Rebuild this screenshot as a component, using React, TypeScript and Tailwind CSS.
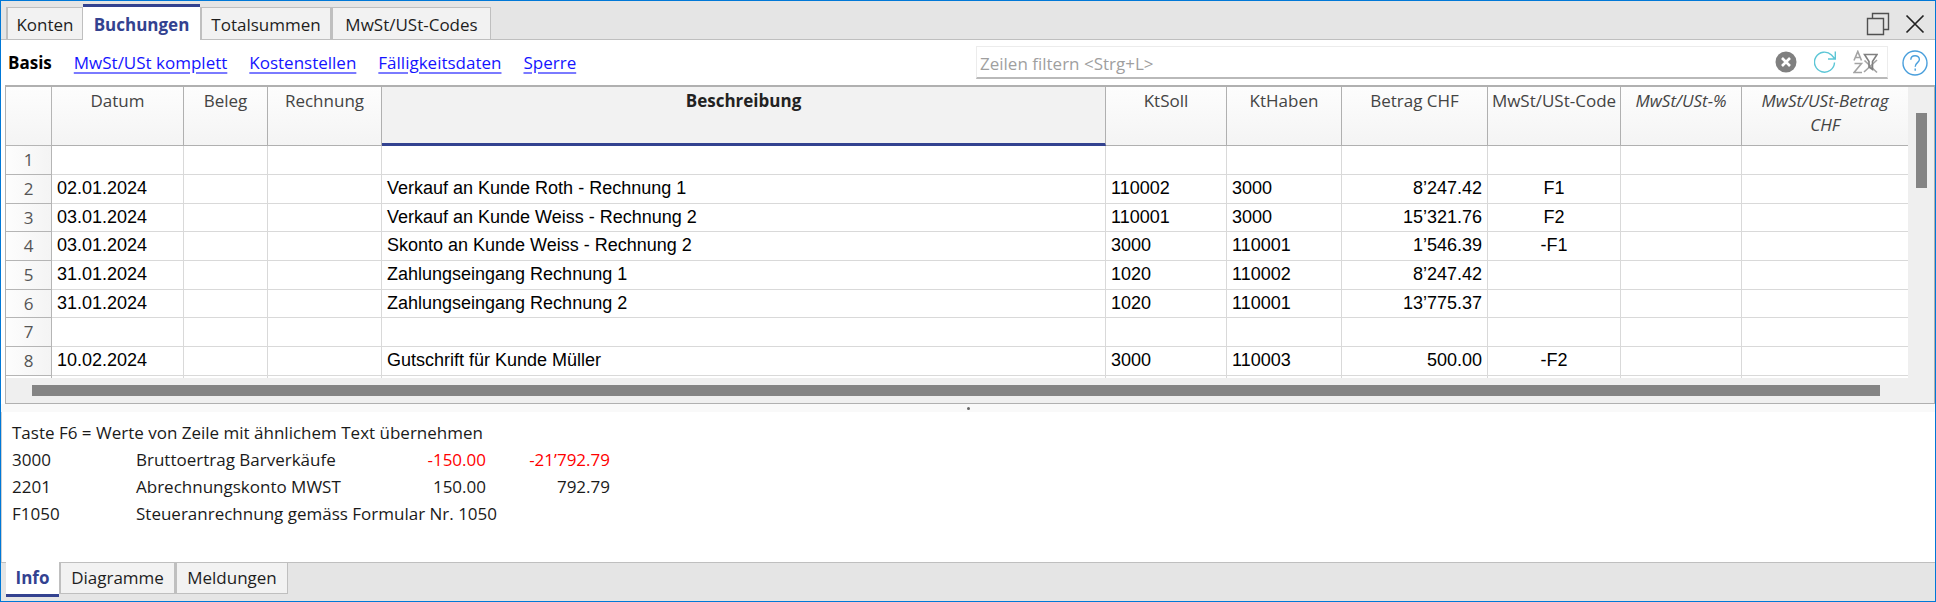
import React from "react";

type Align = "left" | "center" | "right";
interface Column {
  key: string;
  label: string;
  width: string;
  align: Align;
  italic?: boolean;
  active?: boolean;
}

const columns: Column[] = [
  { key: "datum", label: "Datum", width: "w-[132px]", align: "left" },
  { key: "beleg", label: "Beleg", width: "w-[84px]", align: "left" },
  { key: "rechnung", label: "Rechnung", width: "w-[114px]", align: "left" },
  { key: "text", label: "Beschreibung", width: "", align: "left", active: true },
  { key: "soll", label: "KtSoll", width: "w-[121px]", align: "left" },
  { key: "haben", label: "KtHaben", width: "w-[115px]", align: "left" },
  { key: "betrag", label: "Betrag CHF", width: "w-[146px]", align: "right" },
  { key: "code", label: "MwSt/USt-Code", width: "w-[133px]", align: "center" },
  { key: "prozent", label: "MwSt/USt-%", width: "w-[121px]", align: "center", italic: true },
  { key: "mwst", label: "MwSt/USt-Betrag CHF", width: "w-[166px]", align: "center", italic: true },
];

const rows: Record<string, string>[] = [
  {},
  { datum: "02.01.2024", text: "Verkauf an Kunde Roth - Rechnung 1", soll: "110002", haben: "3000", betrag: "8’247.42", code: "F1" },
  { datum: "03.01.2024", text: "Verkauf an Kunde Weiss - Rechnung 2", soll: "110001", haben: "3000", betrag: "15’321.76", code: "F2" },
  { datum: "03.01.2024", text: "Skonto an Kunde Weiss - Rechnung 2", soll: "3000", haben: "110001", betrag: "1’546.39", code: "-F1" },
  { datum: "31.01.2024", text: "Zahlungseingang Rechnung 1", soll: "1020", haben: "110002", betrag: "8’247.42" },
  { datum: "31.01.2024", text: "Zahlungseingang Rechnung 2", soll: "1020", haben: "110001", betrag: "13’775.37" },
  {},
  { datum: "10.02.2024", text: "Gutschrift für Kunde Müller", soll: "3000", haben: "110003", betrag: "500.00", code: "-F2" },
];

const alignClass: Record<Align, string> = {
  left: "text-left pl-[5px]",
  center: "text-center",
  right: "text-right pr-[5px]",
};

const infoRows = [
  { id: "3000", name: "Bruttoertrag Barverkäufe", a: "-150.00", b: "-21’792.79", negative: true },
  { id: "2201", name: "Abrechnungskonto MWST", a: "150.00", b: "792.79" },
  { id: "F1050", name: "Steueranrechnung gemäss Formular Nr. 1050", a: "", b: "" },
];

function TopTabs() {
  const tabs = [
    { label: "Konten", width: "w-[77px]" },
    { label: "Buchungen", width: "w-[117px]", active: true },
    { label: "Totalsummen", width: "w-[131px]" },
    { label: "MwSt/USt-Codes", width: "w-[160px]" },
  ];
  return (
    <div className="flex h-[39px] items-end justify-between bg-[#e5e5e5] shadow-[inset_0_-1px_0_#bfbfbf]">
      <div role="tablist" className="flex items-end pl-[5px]">
        {tabs.map((t) => (
          <button
            key={t.label}
            role="tab"
            aria-selected={!!t.active}
            className={
              t.active
                ? `${t.width} h-[36px] whitespace-nowrap border-t-[3px] border-[#334290] bg-white pt-[2px] font-bold text-[#334290]`
                : `${t.width} h-[33px] whitespace-nowrap border border-l-2 border-[#bfbfbf] bg-[#f2f2f2] pt-[2px] text-[#1e1e1e]`
            }
          >
            {t.label}
          </button>
        ))}
      </div>
      <div className="flex gap-[15px] pb-[4px] pr-[10px]">
        <button aria-label="Fenster wiederherstellen">
          <svg width="24" height="24" viewBox="0 0 24 24" fill="none" stroke="#505050" strokeWidth="1.4">
            <path d="M1.5 6.5h16v16h-16zM6.5 6.500v-5h16v16h-5" />
          </svg>
        </button>
        <button aria-label="Schliessen">
          <svg width="20" height="24" viewBox="0 0 20 24" fill="none" stroke="#222" strokeWidth="1.7">
            <path d="M1.500 3.500 18.500 20.500M18.500 3.500 1.500 20.500" />
          </svg>
        </button>
      </div>
    </div>
  );
}

function Toolbar() {
  const views = ["MwSt/USt komplett", "Kostenstellen", "Fälligkeitsdaten", "Sperre"];
  return (
    <div className="flex h-[45px] items-center justify-between bg-white px-[7px]">
      <nav className="flex items-center gap-[22px] whitespace-nowrap">
        <span className="font-bold text-black">Basis</span>
        {views.map((v) => (
          <a key={v} href="#" className="text-[#1414ff] underline decoration-[#7a7aff] decoration-2 underline-offset-[3px]">
            {v}
          </a>
        ))}
      </nav>
      <div className="flex w-[952px] items-center gap-[14px]">
        <div className="flex h-[33px] flex-1 items-center gap-[17px] border border-b-2 border-[#ececec] border-b-[#b9b9b9] pl-[3px] pr-[9px]">
          <input
            aria-label="Zeilen filtern"
            placeholder="Zeilen filtern <Strg+L>"
            className="min-w-0 flex-1 bg-transparent pt-[4px] outline-none placeholder:text-[#9f9f9f]"
          />
          <button aria-label="Filter löschen">
            <svg width="22" height="22" viewBox="0 0 22 22">
              <circle cx="11" cy="11" r="10.500" fill="#808080" />
              <path d="M7 7l8 8M15 7l-8 8" stroke="#fff" strokeWidth="2.600" />
            </svg>
          </button>
          <button aria-label="Aktualisieren">
            <svg width="22" height="22" viewBox="0 0 22 22" fill="none" stroke="#5cc6d6" strokeWidth="1.400">
              <path d="M20.500 11.500A10 10 0 1 1 17.500 4L21 8M21.300 .5V8H14" />
            </svg>
          </button>
          <button aria-label="Sortierung und Filter entfernen">
            <svg width="25" height="24" viewBox="0 0 25 24" fill="none" stroke="#a3a3a3" strokeWidth="1.600">
              <path d="M1 10.500 4.800 1.500 8.500 10.500M2.300 7.500h5M1.500 13.500h7L1 22.500h8" />
              <path d="M11 22 24 10M11.500 10.500 24 22.500" />
              <path d="M11.500 4.500h12.500l-4.500 7v8l-3.500-2.500v-5.500z" stroke="#808080" />
            </svg>
          </button>
        </div>
        <button aria-label="Hilfe">
          <svg width="26" height="26" viewBox="0 0 26 26" fill="none" stroke="#4a9fdc" strokeWidth="1.400">
            <circle cx="13" cy="13" r="12" />
            <path d="M8.800 9.800c0-5.400 8.600-5.200 8.600-.4 0 3.200-4.200 3.400-4.200 7.400M13.200 18.600v2.200" />
          </svg>
        </button>
      </div>
    </div>
  );
}

function Grid() {
  return (
    <div className="ml-[4px] border border-t-2 border-[#b0b0b0] bg-[#efefef]">
      <div className="flex">
        <div className="h-[291px] min-w-0 flex-1 overflow-hidden bg-white">
          <table className="w-full table-fixed border-separate border-spacing-0">
            <thead>
              <tr className="h-[59px] bg-linear-to-b from-[#fdfdfd] to-[#f4f4f4]">
                <th aria-label="Zeile" className="w-[46px] border-b border-r border-[#b5b5b5]" />
                {columns.map((c, i) => (
                  <th
                    key={c.key}
                    className={`${c.width} border-[#b0b0b0] pt-[2px] align-top leading-6 ${i < columns.length - 1 ? "border-r px-0" : "px-4"} ${
                      c.active ? "border-b-[3px] border-b-[#334290] bg-[#f2f2f2] font-bold text-[#222]" : "border-b font-normal text-[#444]"
                    } ${c.italic ? "italic" : ""}`}
                  >
                    {c.label}
                  </th>
                ))}
              </tr>
            </thead>
            <tbody className="font-['Liberation_Sans',Arial,sans-serif] text-[18px] leading-6 text-black">
              {rows.map((r, n) => (
                <tr key={n} className="h-[29px] [&:nth-child(3n)]:h-[28px]">
                  <th
                    scope="row"
                    className="border-b border-r border-[#b5b5b5] bg-linear-to-r from-[#fdfdfd] to-[#f4f4f4] p-0 font-['Open_Sans','Noto_Sans',sans-serif] text-[17px] font-normal text-[#555]"
                  >
                    {n + 1}
                  </th>
                  {columns.map((c, i) => (
                    <td
                      key={c.key}
                      className={`whitespace-nowrap border-b border-[#d9d9d9] pb-[2px] ${i < columns.length - 1 ? "border-r" : ""} ${alignClass[c.align]}`}
                    >
                      {r[c.key]}
                    </td>
                  ))}
                </tr>
              ))}
              <tr aria-hidden="true" className="h-[3px]">
                <td className="border-r border-[#b5b5b5] p-0" />
                {columns.map((c, i) => (
                  <td key={c.key} className={`border-[#d9d9d9] p-0 ${i < columns.length - 1 ? "border-r" : ""}`} />
                ))}
              </tr>
            </tbody>
          </table>
        </div>
        <div className="w-[26px] pl-[8px] pt-[26px]">
          <div className="h-[75px] w-[11px] bg-[#848484]" />
        </div>
      </div>
      <div className="pb-[7px] pl-[26px] pr-[54px] pt-[7px]">
        <div className="h-[11px] bg-[#848484]" />
      </div>
    </div>
  );
}

function InfoPanel() {
  return (
    <div className="min-h-0 flex-1 border-l border-[#cfcfcf] bg-white pl-[10px] pt-[7px] text-[#1a1a1a]">
      <p className="leading-[27px]">Taste F6 = Werte von Zeile mit ähnlichem Text übernehmen</p>
      <table className="table-fixed border-collapse leading-[27px]">
        <tbody>
          {infoRows.map((r) => (
            <tr key={r.id} className="whitespace-nowrap">
              <td className="w-[124px] p-0">{r.id}</td>
              <td className="w-[250px] p-0" colSpan={r.a ? 1 : 3}>
                {r.name}
              </td>
              {r.a && <td className={`w-[100px] p-0 text-right ${r.negative ? "text-[#ff0000]" : ""}`}>{r.a}</td>}
              {r.b && <td className={`w-[124px] p-0 text-right ${r.negative ? "text-[#ff0000]" : ""}`}>{r.b}</td>}
            </tr>
          ))}
        </tbody>
      </table>
    </div>
  );
}

function BottomTabs() {
  const tabs = [
    { label: "Info", width: "w-[53px]", active: true },
    { label: "Diagramme", width: "w-[116px]" },
    { label: "Meldungen", width: "w-[113px]" },
  ];
  return (
    <div role="tablist" className="flex h-[39px] items-start bg-[#e5e5e5] pl-[5px] shadow-[inset_0_1px_0_#bfbfbf]">
      {tabs.map((t) => (
        <button
          key={t.label}
          role="tab"
          aria-selected={!!t.active}
          className={
            t.active
              ? `${t.width} h-[35px] border-b-[3px] border-[#334290] bg-white font-bold text-[#334290]`
              : `${t.width} h-[32px] border border-l-2 border-[#bfbfbf] bg-[#f2f2f2] text-[#1e1e1e]`
          }
        >
          {t.label}
        </button>
      ))}
    </div>
  );
}

export default function App() {
  return (
    <main className="flex min-h-screen flex-col overflow-hidden border border-[#0078d7] bg-white font-['Open_Sans','Noto_Sans',sans-serif] text-[17px]">
      <TopTabs />
      <Toolbar />
      <Grid />
      <div className="flex h-[8px] items-center justify-center bg-[#f9f9f9]">
        <span className="size-[3px] rounded-full bg-[#666]" />
      </div>
      <InfoPanel />
      <BottomTabs />
    </main>
  );
}
